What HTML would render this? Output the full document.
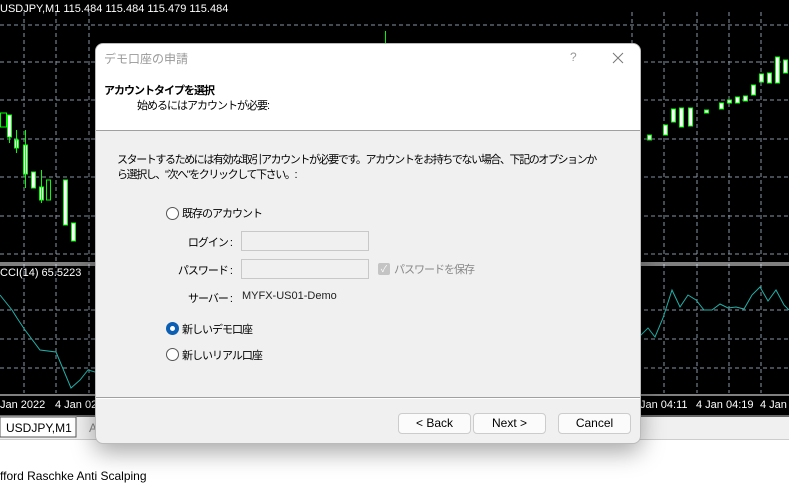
<!DOCTYPE html>
<html><head><meta charset="utf-8"><style>
*{margin:0;padding:0;box-sizing:border-box}
body{width:789px;height:484px;overflow:hidden;position:relative;background:#fff;font-family:"Liberation Sans","Noto Sans CJK JP",sans-serif;font-size:12px;color:#000}
.abs{position:absolute}
.dlg{left:95px;top:43px;width:546px;height:401px;background:#f0f0f0;border-radius:8px;box-shadow:0 8px 24px rgba(0,0,0,.35);overflow:hidden;border:1px solid #bbb}
.t{font-size:11px;letter-spacing:-1px;white-space:nowrap}
.lbl{position:absolute;right:408px;font-size:11px;letter-spacing:-1px;white-space:nowrap;text-align:right}
.inp{position:absolute;width:128px;height:20px;border:1px solid #c8c8c8;background:#f0f0f0}
.radio{position:absolute;width:13px;height:13px;border:1px solid #555;border-radius:50%;background:#fff}
.btn{position:absolute;top:369px;height:21px;border:1px solid #ccc;border-radius:4px;background:#fbfbfb;text-align:center;line-height:19px;font-size:12px}
</style></head><body>
<svg class="abs" style="left:0;top:0" width="789" height="440">
<rect width="789" height="417" fill="#000"/>
<g stroke="#8a96a6" stroke-dasharray="4,3" stroke-width="1">
<line x1="0" y1="25" x2="789" y2="25"/><line x1="0" y1="62" x2="789" y2="62"/><line x1="0" y1="100" x2="789" y2="100"/><line x1="0" y1="139" x2="789" y2="139"/><line x1="0" y1="177" x2="789" y2="177"/><line x1="0" y1="216" x2="789" y2="216"/><line x1="0" y1="254" x2="789" y2="254"/>
<line x1="0" y1="310" x2="789" y2="310"/><line x1="0" y1="339" x2="789" y2="339"/><line x1="0" y1="368" x2="789" y2="368"/>
<line x1="24" y1="12" x2="24" y2="393"/><line x1="56" y1="12" x2="56" y2="393"/><line x1="89" y1="12" x2="89" y2="393"/>
<line x1="632" y1="12" x2="632" y2="393"/><line x1="664" y1="12" x2="664" y2="393"/><line x1="697" y1="12" x2="697" y2="393"/><line x1="729" y1="12" x2="729" y2="393"/><line x1="761" y1="12" x2="761" y2="393"/>
</g>
<line x1="0" y1="263" x2="789" y2="263" stroke="#fff"/><line x1="0" y1="265" x2="789" y2="265" stroke="#fff"/>
<line x1="0" y1="395" x2="789" y2="395" stroke="#fff"/>
<g stroke="#0f0" fill="#fff" stroke-width="1">
<rect x="0.5" y="113" width="6" height="14" fill="#000"/><rect x="7.5" y="115" width="4" height="22"/><line x1="9.5" y1="137" x2="9.5" y2="143"/>
<rect x="14.5" y="140" width="4" height="8"/><line x1="16.5" y1="130" x2="16.5" y2="153"/>
<rect x="23.5" y="145" width="4" height="29"/><line x1="25.5" y1="130" x2="25.5" y2="188"/>
<rect x="31.5" y="172" width="4" height="16"/><rect x="39.5" y="187" width="4" height="13"/><line x1="41.5" y1="170" x2="41.5" y2="203"/>
<rect x="46.5" y="180" width="4" height="20" fill="#000"/><rect x="63.5" y="180" width="4" height="45"/><rect x="71.5" y="223" width="4" height="18"/>
<rect x="608.5" y="135" width="4" height="4"/><rect x="629.5" y="125" width="4" height="10"/><rect x="647.5" y="135" width="4" height="5"/>
<rect x="663.5" y="125" width="4" height="10"/><rect x="671.5" y="109" width="4" height="13"/><rect x="679.5" y="108" width="4" height="19"/><rect x="688.5" y="108" width="4" height="18"/>
<rect x="704.5" y="110" width="4" height="3"/><rect x="719.5" y="103" width="4" height="6"/><rect x="727.5" y="100" width="4" height="3"/><rect x="735.5" y="97" width="4" height="6"/><rect x="743.5" y="96" width="4" height="5"/>
<rect x="751.5" y="85" width="4" height="10"/><rect x="759.5" y="74" width="4" height="8"/><rect x="767.5" y="73" width="4" height="10"/><rect x="775.5" y="57" width="4" height="26"/><rect x="783.5" y="60" width="4" height="13"/>
<line x1="385.5" y1="31" x2="385.5" y2="43"/>
</g>
<polyline fill="none" stroke="#20b2aa" points="0,295 12,310 17,318 25,330 40,350 56,352 71,388 80,380 88,370 95,372 640,336 648,328 655,337 663,318 672,290 680,307 688,295 696,300 704,310 712,310 720,304 728,308 736,307 744,309 752,295 760,287 768,301 776,290 784,305 789,310"/>
<rect x="0" y="417" width="789" height="23" fill="#f0f0f0"/>
<line x1="0" y1="416" x2="789" y2="416" stroke="#ccc"/>
<line x1="0" y1="440" x2="789" y2="440" stroke="#aaa"/>
<rect x="0" y="417" width="76" height="20" fill="#fff" stroke="#555"/>
<text x="0" y="12" fill="#fff" font-size="11" font-family="Liberation Sans">USDJPY,M1  115.484 115.484 115.479 115.484</text>
<text x="0" y="276" fill="#fff" font-size="11" font-family="Liberation Sans">CCI(14) 65.5223</text>
<text x="0" y="408" fill="#fff" font-size="11" font-family="Liberation Sans">Jan 2022</text>
<text x="55" y="408" fill="#fff" font-size="11" font-family="Liberation Sans">4 Jan 02:5</text>
<text x="640" y="408" fill="#fff" font-size="11" font-family="Liberation Sans">Jan 04:11</text>
<text x="696" y="408" fill="#fff" font-size="11" font-family="Liberation Sans">4 Jan 04:19</text>
<text x="760" y="408" fill="#fff" font-size="11" font-family="Liberation Sans">4 Jan 0</text>
<text x="6" y="432" fill="#000" font-size="12" font-family="Liberation Sans">USDJPY,M1</text>
<text x="89" y="432" fill="#888" font-size="12" font-family="Liberation Sans">A</text>
</svg>
<div class="abs" style="left:0;top:469px;font-size:12px;white-space:nowrap">fford Raschke Anti Scalping</div>

<div class="abs dlg">
<div class="abs" style="left:0;top:0;width:546px;height:87px;background:#fff;border-bottom:1px solid #a0a0a0"></div>
<div class="abs" style="left:8px;top:6px;color:#999;font-size:12px;white-space:nowrap">デモ口座の申請</div>
<div class="abs" style="left:474px;top:6px;color:#999;font-size:12px">?</div>
<svg class="abs" style="left:516px;top:8px" width="12" height="12"><path d="M1 1L11 11M11 1L1 11" stroke="#777" stroke-width="1"/></svg>
<div class="abs t" style="left:8px;top:38px;font-weight:bold">アカウントタイプを選択</div>
<div class="abs t" style="left:41px;top:53px">始めるにはアカウントが必要:</div>
<div class="abs t" style="left:21px;top:109px;line-height:15px;letter-spacing:-1.4px">スタートするためには有効な取引アカウントが必要です。アカウントをお持ちでない場合、下記のオプションか<br>ら選択し、"次へ"をクリックして下さい。:</div>
<div class="radio" style="left:70px;top:163px"></div>
<div class="abs t" style="left:86px;top:161px">既存のアカウント</div>
<div class="lbl" style="top:190px">ログイン :</div>
<div class="inp" style="left:145px;top:187px"></div>
<div class="lbl" style="top:218px">パスワード :</div>
<div class="inp" style="left:145px;top:215px"></div>
<div class="abs" style="left:282px;top:219px;width:12px;height:12px;background:#c4c4c4;border-radius:2px;color:#fff;font-size:9px;text-align:center;line-height:12px">✓</div>
<div class="abs t" style="left:298px;top:217px;color:#888">パスワードを保存</div>
<div class="lbl" style="top:246px">サーバー :</div>
<div class="abs" style="left:146px;top:246px;color:#222;font-size:11px;white-space:nowrap">MYFX-US01-Demo</div>
<div class="radio" style="left:70px;top:278px;border:4px solid #0a5fb4"></div>
<div class="abs t" style="left:86px;top:277px">新しいデモ口座</div>
<div class="radio" style="left:70px;top:304px"></div>
<div class="abs t" style="left:86px;top:303px">新しいリアル口座</div>
<div class="abs" style="left:0;top:353px;width:546px;border-top:1px solid #a0a0a0;border-bottom:1px solid #fff"></div>
<div class="btn" style="left:302px;width:73px">&lt; Back</div>
<div class="btn" style="left:377px;width:73px">Next &gt;</div>
<div class="btn" style="left:462px;width:73px">Cancel</div>
</div>
</body></html>
